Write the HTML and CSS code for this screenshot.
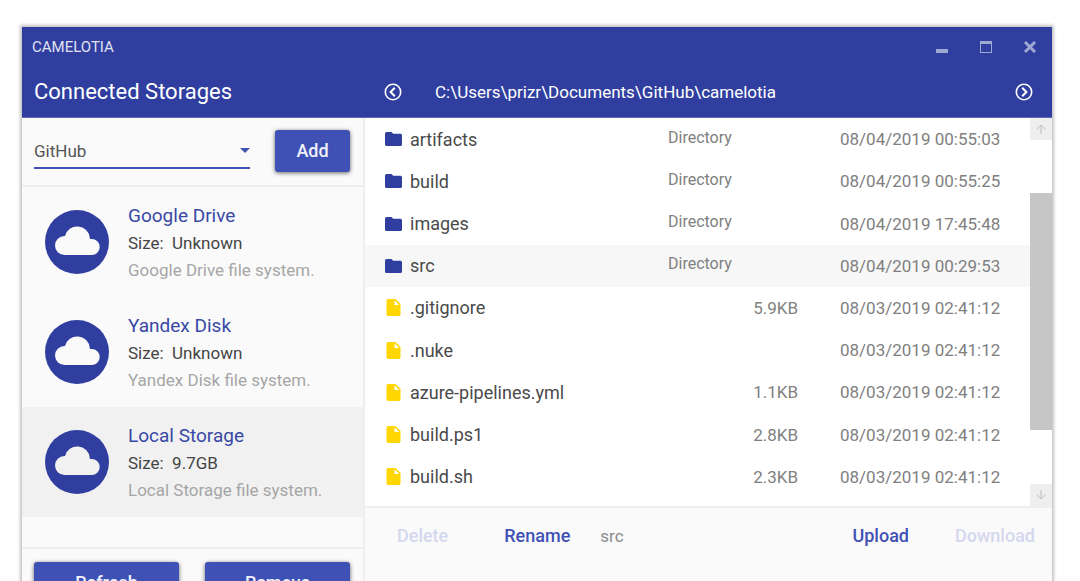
FILE: index.html
```html
<!DOCTYPE html>
<html lang="en">
<head>
<meta charset="utf-8">
<title>Camelotia</title>
<link rel="stylesheet" href="styles.css">
</head>
<body>
<svg class="sprite" aria-hidden="true">
  <symbol id="cloud" viewBox="0 0 64 64"><circle cx="32" cy="32" r="32" fill="#303f9f"/><path fill="currentColor" d="M19.500 45A9.500 9.500 0 0 1 19.500 26H20A12.600 12.600 0 0 1 44.800 28V29H46.700A8 8 0 0 1 46.700 45z"/></symbol>
  <symbol id="folder" viewBox="0 0 17 14"><path fill="#303f9f" d="M1.500 0H6.500L8.200 1.700H15.500A1.500 1.500 0 0 1 17 3.200V12.500A1.500 1.500 0 0 1 15.500 14H1.500A1.500 1.500 0 0 1 0 12.500V1.500A1.500 1.500 0 0 1 1.500 0z"/></symbol>
  <symbol id="file" viewBox="0 0 17 17"><path fill="#ffd600" fill-rule="evenodd" d="M3.200 0H10.500L15.500 5V15.300A1.700 1.700 0 0 1 13.800 17H3.200A1.700 1.700 0 0 1 1.500 15.300V1.700A1.700 1.700 0 0 1 3.200 0zM9.500 1.300V6H14.200z"/></symbol>
</svg>
<main class="window">
  <header class="header">
    <div class="titlebar">
      <span class="app-name">CAMELOTIA</span>
      <div class="controls">
        <button class="control" aria-label="Minimize"><svg width="14" height="14" viewBox="0 0 14 14"><path fill="currentColor" d="M1 9h12v4H1z"/></svg></button>
        <button class="control" aria-label="Maximize"><svg width="14" height="14" viewBox="0 0 14 14"><path fill="currentColor" fill-rule="evenodd" d="M1 1h12v12H1zM2 4v8h10V4z"/></svg></button>
        <button class="control" aria-label="Close"><svg width="14" height="14" viewBox="0 0 14 14"><path stroke="currentColor" stroke-width="3" d="M2 2l10 10M12 2L2 12"/></svg></button>
      </div>
    </div>
    <div class="appbar">
      <h1 class="heading">Connected Storages</h1>
      <div class="pathbar">
        <button class="nav" aria-label="Back"><svg width="18" height="18" viewBox="0 0 18 18" fill="none" stroke="currentColor" stroke-width="2"><circle cx="9" cy="9" r="7.700" stroke-width="1.600"/><path d="M10.800 4.800L6.600 9l4.200 4.200"/></svg></button>
        <span class="path">C:\Users\prizr\Documents\GitHub\camelotia</span>
        <button class="nav" aria-label="Open"><svg width="18" height="18" viewBox="0 0 18 18" fill="none" stroke="currentColor" stroke-width="2"><circle cx="9" cy="9" r="7.700" stroke-width="1.600"/><path d="M7.200 4.800L11.400 9l-4.200 4.200"/></svg></button>
      </div>
    </div>
  </header>
  <div class="content">
    <aside class="sidebar">
      <form class="add-form">
        <div class="select-wrap">
          <select class="select" aria-label="Storage provider"><option>GitHub</option></select>
          <svg class="caret" width="10" height="5" viewBox="0 0 10 5"><path fill="#3f51b5" d="M0 0h10L5 5z"/></svg>
        </div>
        <button class="button" type="button">Add</button>
      </form>
      <ul class="storages">
        <li class="storage">
          <svg class="avatar"><use href="#cloud"/></svg>
          <div><h2 class="storage-name">Google Drive</h2><p class="size">Size:&nbsp; Unknown</p><p class="description">Google Drive file system.</p></div>
        </li>
        <li class="storage">
          <svg class="avatar"><use href="#cloud"/></svg>
          <div><h2 class="storage-name">Yandex Disk</h2><p class="size">Size:&nbsp; Unknown</p><p class="description">Yandex Disk file system.</p></div>
        </li>
        <li class="storage selected">
          <svg class="avatar"><use href="#cloud"/></svg>
          <div><h2 class="storage-name">Local Storage</h2><p class="size">Size:&nbsp; 9.7GB</p><p class="description">Local Storage file system.</p></div>
        </li>
      </ul>
      <div class="storage-actions">
        <button class="button">Refresh</button>
        <button class="button">Remove</button>
      </div>
    </aside>
    <section class="browser">
      <div class="list">
        <div class="table-wrap">
          <table class="files">
            <tbody>
              <tr><td class="icon"><svg class="folder"><use href="#folder"/></svg></td><td class="name">artifacts</td><td class="type">Directory</td><td class="date">08/04/2019 00:55:03</td></tr>
              <tr><td class="icon"><svg class="folder"><use href="#folder"/></svg></td><td class="name">build</td><td class="type">Directory</td><td class="date">08/04/2019 00:55:25</td></tr>
              <tr><td class="icon"><svg class="folder"><use href="#folder"/></svg></td><td class="name">images</td><td class="type">Directory</td><td class="date">08/04/2019 17:45:48</td></tr>
              <tr class="current"><td class="icon"><svg class="folder"><use href="#folder"/></svg></td><td class="name">src</td><td class="type">Directory</td><td class="date">08/04/2019 00:29:53</td></tr>
              <tr><td class="icon"><svg class="file"><use href="#file"/></svg></td><td class="name">.gitignore</td><td class="bytes">5.9KB</td><td class="date">08/03/2019 02:41:12</td></tr>
              <tr><td class="icon"><svg class="file"><use href="#file"/></svg></td><td class="name">.nuke</td><td class="bytes"></td><td class="date">08/03/2019 02:41:12</td></tr>
              <tr><td class="icon"><svg class="file"><use href="#file"/></svg></td><td class="name">azure-pipelines.yml</td><td class="bytes">1.1KB</td><td class="date">08/03/2019 02:41:12</td></tr>
              <tr><td class="icon"><svg class="file"><use href="#file"/></svg></td><td class="name">build.ps1</td><td class="bytes">2.8KB</td><td class="date">08/03/2019 02:41:12</td></tr>
              <tr><td class="icon"><svg class="file"><use href="#file"/></svg></td><td class="name">build.sh</td><td class="bytes">2.3KB</td><td class="date">08/03/2019 02:41:12</td></tr>
            </tbody>
          </table>
        </div>
        <div class="scrollbar">
          <button class="scroll-button" aria-label="Scroll up"><svg width="10" height="10" viewBox="0 0 10 10" fill="none" stroke="currentColor"><path d="M5 10V1M1 5l4-4 4 4"/></svg></button>
          <div class="track"><div class="thumb"></div></div>
          <button class="scroll-button" aria-label="Scroll down"><svg width="10" height="10" viewBox="0 0 10 10" fill="none" stroke="currentColor"><path d="M5 0v9M1 5l4 4 4-4"/></svg></button>
        </div>
      </div>
      <div class="toolbar">
        <button class="flat" disabled>Delete</button>
        <button class="flat rename">Rename</button>
        <input class="new-name" type="text" value="src" aria-label="New name">
        <button class="flat">Upload</button>
        <button class="flat download" disabled>Download</button>
      </div>
    </section>
  </div>
</main>
</body>
</html>
```

FILE: styles.css
```css
* { box-sizing: border-box; }

body {
  margin: 0;
  height: 100vh;
  overflow: hidden;
  background: #fff;
  color: #444;
  font-family: Roboto, "Liberation Sans", sans-serif;
  font-size: 17px;
}

h1, h2, p, ul { margin: 0; padding: 0; font-weight: 400; }
button, input, select { font: inherit; }
button { padding: 0; border: 0; background: none; color: inherit; }
svg { display: block; }
.sprite { position: absolute; width: 0; height: 0; }

.window {
  margin: 27px 28px 0 22px;
  box-shadow: 0 0 3px 2px #c4c4c4;
}

.header {
  height: 91px;
  border-bottom: 1px solid #5c68b4;
  background: #303f9f;
  color: #fff;
}

.titlebar {
  display: flex;
  align-items: center;
  justify-content: space-between;
  height: 39px;
  padding: 0 15px 0 10px;
}
.app-name { color: #e0e2f1; font-size: 15px; }
.controls { display: flex; gap: 30px; color: #a0a8d4; }

.appbar { display: flex; align-items: center; height: 51px; }
.heading { width: 343px; padding-left: 12px; font-size: 22px; }
.pathbar {
  flex: 1;
  display: flex;
  align-items: center;
  padding: 0 19px;
}
.path { flex: 1; padding-left: 33px; }

.content { display: flex; }

.sidebar {
  width: 343px;
  border-right: 2px solid #eee;
  background: #fafafa;
}
.add-form {
  display: flex;
  gap: 25px;
  height: 69px;
  padding: 12px 13px 0 12px;
  border-bottom: 2px solid #eee;
}
.select-wrap { position: relative; flex: 1; height: 39px; border-bottom: 2px solid #3f51b5; }
.select {
  appearance: none;
  width: 100%;
  height: 42px;
  padding: 0;
  border: 0;
  background: none;
  color: #555;
}
.caret { position: absolute; top: 18px; right: 0; }

.button {
  flex: 1;
  height: 42px;
  padding-bottom: 2px;
  border-radius: 3px;
  background: #3f51b5;
  box-shadow: 0 1px 4px rgba(0, 0, 0, .6);
  color: #f0f1fa;
  font-size: 18px;
  font-weight: 500;
}
.add-form .button { flex: none; width: 75px; }

.storages { min-height: 360px; list-style: none; }
.storage {
  display: flex;
  align-items: center;
  gap: 19px;
  height: 110px;
  padding-left: 23px;
  color: #fafafa;
}
.storage.selected { background: #f1f1f1; color: #f1f1f1; }
.avatar { width: 64px; height: 64px; }
.storage-name { color: #3848a5; font-size: 19px; line-height: 28px; }
.size { color: #444; line-height: 27px; }
.description { color: #a6a6a6; line-height: 26px; }
.storage-actions {
  display: flex;
  gap: 26px;
  padding: 13px 13px 13px 12px;
  border-top: 2px solid #eee;
}

.browser { flex: 1; display: flex; flex-direction: column; }
.list { display: flex; }
.table-wrap { flex: 1; padding-bottom: 8px; }
.files {
  width: 100%;
  height: 380px;
  table-layout: fixed;
  border-collapse: collapse;
}
td { height: 42px; padding: 0; color: #808080; }
.current { background: #f7f7f7; }
.icon { width: 45px; padding-left: 20px; }
.folder { width: 17px; height: 14px; }
.file { width: 17px; height: 17px; }
.files .name { color: #4a4a4a; font-size: 18px; }
.type { width: 130px; padding-bottom: 4px; font-size: 16px; }
.bytes { width: 130px; text-align: right; }
.date { width: 232px; padding-left: 42px; }

.scrollbar { display: flex; flex-direction: column; width: 22px; }
.scroll-button {
  display: grid;
  place-items: center;
  height: 22px;
  background: #eee;
  color: #bbb;
}
.track { flex: 1; padding: 53px 0 54px; }
.thumb { height: 100%; background: #c6c6c6; }

.toolbar {
  flex: 1;
  display: flex;
  align-items: flex-start;
  padding: 16px 17px 0 32px;
  border-top: 2px solid #eee;
  background: #fafafa;
}
.flat { color: #3f51b5; font-size: 18px; font-weight: 500; line-height: 24px; }
.flat:disabled { color: #d4d7ee; }
.rename { margin-left: 56px; }
.new-name {
  flex: 1;
  min-width: 0;
  height: 24px;
  margin-left: 30px;
  padding: 0;
  border: 0;
  background: none;
  color: #8c8c8c;
}
.download { margin-left: 46px; }
```
